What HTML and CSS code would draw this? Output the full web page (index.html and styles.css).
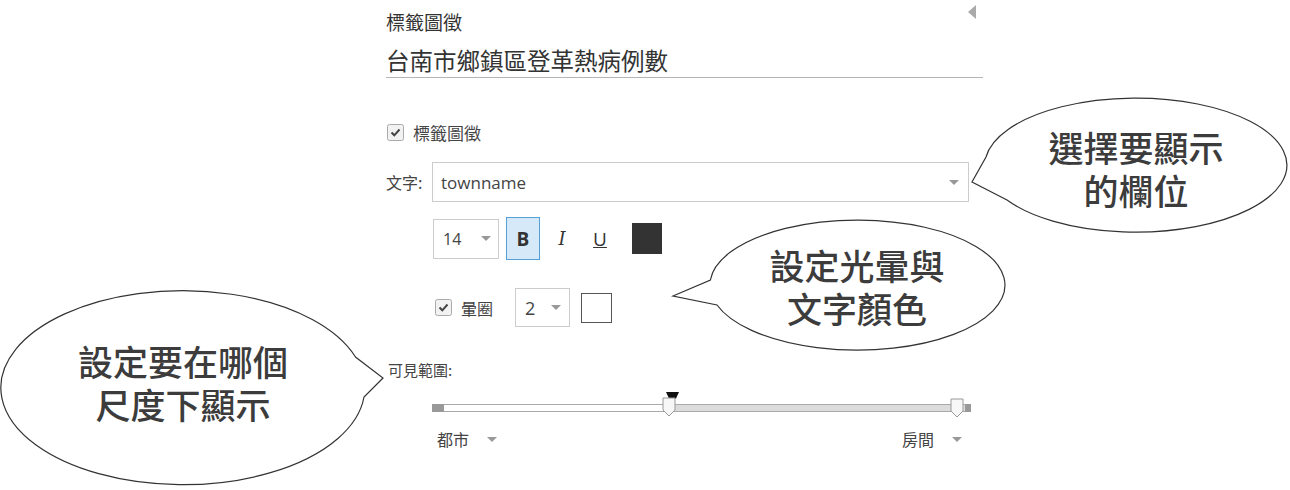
FILE: index.html
```html
<!DOCTYPE html>
<html lang="zh-Hant">
<head>
<meta charset="utf-8">
<title>標籤圖徵</title>
<link rel="stylesheet" href="styles.css">
</head>
<body>
<div class="panel">
  <div class="head">
    <span class="head-title">標籤圖徵</span>
    <span class="collapse"></span>
  </div>
  <div class="title">台南市鄉鎮區登革熱病例數</div>

  <div class="check-row">
    <svg class="checkbox" width="17" height="17" viewBox="0 0 17 17"><rect x="0.5" y="0.5" width="16" height="16" rx="2" fill="#f2f2f2" stroke="#aaa"/><path d="M4.5 8.5 L7.3 11.3 L12.5 5.5" fill="none" stroke="#444" stroke-width="2"/></svg>
    <span>標籤圖徵</span>
  </div>

  <div class="field-row">
    <span class="field-label">文字:</span>
    <div class="select wide"><span>townname</span><span class="caret"></span></div>
  </div>

  <div class="toolbar">
    <div class="select size"><span>14</span><span class="caret"></span></div>
    <div class="tool bold">B</div>
    <div class="tool italic">I</div>
    <div class="tool underline">U</div>
    <div class="swatch dark"></div>
  </div>

  <div class="halo-row">
    <svg class="checkbox" width="17" height="17" viewBox="0 0 17 17"><rect x="0.5" y="0.5" width="16" height="16" rx="2" fill="#f2f2f2" stroke="#aaa"/><path d="M4.5 8.5 L7.3 11.3 L12.5 5.5" fill="none" stroke="#444" stroke-width="2"/></svg>
    <span class="halo-label">暈圈</span>
    <div class="select halo"><span>2</span><span class="caret"></span></div>
    <div class="swatch light"></div>
  </div>

  <div class="range-label">可見範圍:</div>

  <div class="slider">
    <div class="track">
      <span class="seg end-left"></span>
      <span class="seg low"></span>
      <span class="seg high"></span>
      <span class="seg end-right"></span>
    </div>
    <svg class="marker" width="13" height="7" viewBox="0 0 13 7"><path d="M0 0 H13 L10 6.5 H3 Z" fill="#111"/></svg>
    <svg class="thumb thumb-min" width="14" height="20" viewBox="0 0 14 20"><path d="M1 1 H13 V13 L7 19 L1 13 Z" fill="#f7f7f7" stroke="#999"/></svg>
    <svg class="thumb thumb-max" width="14" height="20" viewBox="0 0 14 20"><path d="M1 1 H13 V13 L7 19 L1 13 Z" fill="#f7f7f7" stroke="#999"/></svg>
  </div>

  <div class="scale-row">
    <span class="scale-item">都市<span class="caret"></span></span>
    <span class="scale-item">房間<span class="caret"></span></span>
  </div>
</div>

<svg class="callouts" width="1290" height="490" viewBox="0 0 1290 490">
  <path d="M986 157 A151 67 0 1 1 1007 200 L972 182 Z" fill="#fff" stroke="#333" stroke-width="1.2"/>
  <path d="M710.4 280 A147.5 65 0 1 1 717 305 L673 296 Z" fill="#fff" stroke="#333" stroke-width="1.2"/>
  <path d="M364 397 A182 97 0 1 1 355.5 357 L383 378 Z" fill="#fff" stroke="#333" stroke-width="1.2"/>
</svg>
<div class="bubble-text b1">選擇要顯示<br>的欄位</div>
<div class="bubble-text b2">設定光暈與<br>文字顏色</div>
<div class="bubble-text b3">設定要在哪個<br>尺度下顯示</div>
</body>
</html>
```

FILE: styles.css
```css
body {
  margin: 0;
  width: 1290px;
  height: 490px;
  overflow: hidden;
  position: relative;
  background: #fff;
  color: #444;
  font-family: "Open Sans", "Noto Sans CJK TC", sans-serif;
}

.panel {
  margin-left: 386px;
  width: 597px;
  padding-top: 8px;
}

.head {
  display: flex;
  justify-content: space-between;
  align-items: flex-start;
  height: 28px;
}

.head-title {
  font-family: "Noto Sans CJK TC", sans-serif;
  font-size: 19px;
  line-height: 28px;
  color: #333;
}

.collapse {
  width: 0;
  height: 0;
  border-top: 7.5px solid transparent;
  border-bottom: 7.5px solid transparent;
  border-right: 8px solid #aaa;
  margin-top: -3px;
  margin-right: 7px;
}

.title {
  margin-top: 9px;
  height: 30px;
  line-height: 30px;
  padding-bottom: 2px;
  font-family: "Noto Sans CJK TC", sans-serif;
  font-size: 23.5px;
  color: #333;
  border-bottom: 1px solid #b5b5b5;
}

.check-row {
  display: flex;
  align-items: center;
  gap: 9px;
  margin-top: 44px;
  margin-left: 1px;
  height: 20px;
  font-family: "Noto Sans CJK TC", sans-serif;
  font-size: 17px;
}

.checkbox {
  display: block;
  flex: 0 0 auto;
}

.field-row {
  display: flex;
  align-items: center;
  margin-top: 20px;
}

.field-label {
  width: 46px;
  font-family: "Noto Sans CJK TC", sans-serif;
  font-size: 16px;
}

.select {
  display: flex;
  align-items: center;
  justify-content: space-between;
  box-sizing: border-box;
  border: 1px solid #ccc;
  background: #fff;
  color: #444;
}

.select.wide {
  width: 537px;
  height: 40px;
  padding: 0 9px 0 8px;
  font-size: 17px;
}

.caret {
  display: inline-block;
  width: 0;
  height: 0;
  border-left: 5px solid transparent;
  border-right: 5px solid transparent;
  border-top: 5px solid #999;
}

.toolbar {
  display: flex;
  align-items: center;
  margin-top: 15px;
  padding-left: 47px;
  height: 43px;
}

.select.size {
  width: 66px;
  height: 40px;
  padding: 0 7px 0 9px;
  font-size: 16px;
}

.tool {
  width: 34px;
  height: 43px;
  box-sizing: border-box;
  display: flex;
  align-items: center;
  justify-content: center;
  font-size: 19px;
  color: #333;
}

.tool.bold {
  margin-left: 7px;
  font-weight: bold;
  background: #d6e9f8;
  border: 1px solid #56a0d8;
}

.tool.italic {
  margin-left: 5px;
  font-family: "DejaVu Serif", serif;
  font-style: italic;
  font-size: 18px;
}

.tool.underline {
  margin-left: 4px;
  text-decoration: underline;
}

.swatch {
  box-sizing: border-box;
}

.swatch.dark {
  width: 30px;
  height: 31px;
  margin-left: 15px;
  background: #333;
}

.halo-row {
  display: flex;
  align-items: center;
  margin-top: 28px;
  padding-left: 49px;
  height: 39px;
}

.halo-label {
  margin-left: 9px;
  font-family: "Noto Sans CJK TC", sans-serif;
  font-size: 16px;
}

.select.halo {
  width: 55px;
  height: 39px;
  margin-left: 22px;
  padding: 0 8px 0 9px;
  font-size: 18px;
}

.swatch.light {
  width: 31px;
  height: 30px;
  margin-left: 11px;
  border: 1.5px solid #555;
  background: #fff;
}

.range-label {
  margin-top: 33px;
  margin-left: 2px;
  font-family: "Noto Sans CJK TC", sans-serif;
  font-size: 15px;
  line-height: 20px;
}

.slider {
  position: relative;
  margin-top: 12px;
  margin-left: 46px;
  width: 539px;
  height: 26px;
  padding-top: 12px;
  box-sizing: border-box;
}

.track {
  display: flex;
  height: 8px;
}

.seg {
  display: block;
  box-sizing: border-box;
}

.seg.end-left {
  flex: 0 0 12px;
  background: #999;
}

.seg.low {
  flex: 0 0 224px;
  background: #fff;
  border-top: 1px solid #aaa;
  border-bottom: 1px solid #aaa;
}

.seg.high {
  flex: 1 1 auto;
  background: #dcdcdc;
  border-top: 1px solid #aaa;
  border-bottom: 1px solid #aaa;
}

.seg.end-right {
  flex: 0 0 6px;
  background: #999;
}

.marker {
  position: absolute;
  left: 234px;
  top: 0;
}

.thumb {
  position: absolute;
}

.thumb-min {
  left: 230px;
  top: 5px;
}

.thumb-max {
  left: 518px;
  top: 6px;
}

.scale-row {
  display: flex;
  justify-content: space-between;
  margin-top: 11px;
  margin-left: 51px;
  width: 525px;
  font-family: "Noto Sans CJK TC", sans-serif;
  font-size: 16px;
  line-height: 20px;
}

.scale-item {
  display: flex;
  align-items: center;
  gap: 18px;
}

.callouts {
  position: absolute;
  top: 0;
  left: 0;
  pointer-events: none;
}

.bubble-text {
  position: absolute;
  width: 300px;
  text-align: center;
  font-family: "Noto Sans CJK TC", sans-serif;
  font-weight: 500;
  font-size: 35px;
  line-height: 43px;
  color: #3c3c3c;
}

.bubble-text.b1 {
  left: 986px;
  top: 125px;
}

.bubble-text.b2 {
  left: 707px;
  top: 243px;
}

.bubble-text.b3 {
  left: 33px;
  top: 339px;
}
```
